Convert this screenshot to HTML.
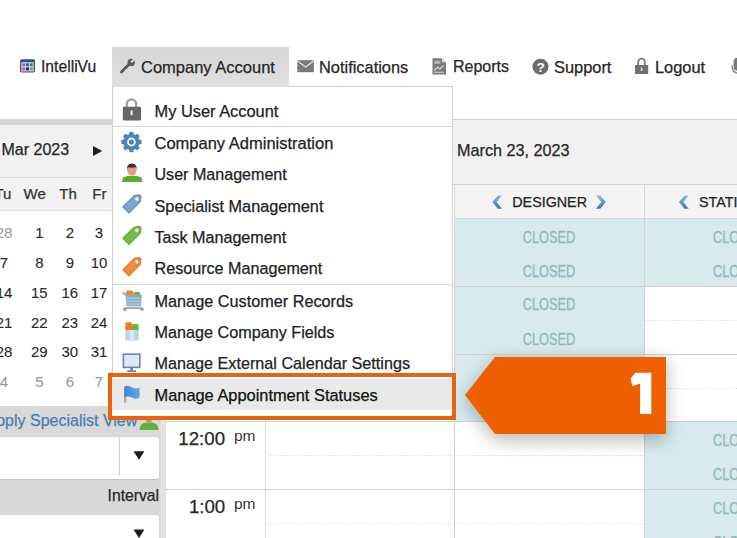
<!DOCTYPE html>
<html><head><meta charset="utf-8">
<style>
*{margin:0;padding:0;box-sizing:border-box}
html,body{width:737px;height:538px;overflow:hidden;background:#fff;font-family:"Liberation Sans",sans-serif;color:#262626}
.a{position:absolute}
.t{position:absolute;line-height:1;white-space:nowrap;-webkit-text-stroke:0.25px currentColor}
.cal .t{-webkit-text-stroke:0.1px currentColor}
</style></head><body>
<div class="a" style="left:0;top:0;width:737px;height:538px;overflow:hidden">

<!-- NAV -->
<div class="t" style="left:41px;top:58.9px;font-size:15.7px">IntelliVu</div>
<div class="t" style="left:319px;top:58.9px;font-size:16.4px">Notifications</div>
<div class="t" style="left:453px;top:58.9px;font-size:16px">Reports</div>
<div class="t" style="left:554px;top:58.9px;font-size:16.4px">Support</div>
<div class="t" style="left:655px;top:58.9px;font-size:16.4px">Logout</div>

<!-- LEFT CALENDAR -->
<div class="a" style="left:0;top:119px;width:165px;height:6px;background:#d6d6d6"></div>
<div class="a" style="left:0;top:125px;width:165px;height:53px;background:#f1f1f1;border-bottom:1px solid #dcdcdc"></div>
<div class="a" style="left:0;top:178px;width:165px;height:33px;background:#f2f2f2;border-bottom:1px solid #dcdcdc"></div>
<div class="t" style="left:1.5px;top:141.7px;font-size:16px">Mar 2023</div>
<svg class="a" style="left:92px;top:143px" width="12" height="14"><polygon points="1,3 10.2,8 1,13" fill="#1e1e1e"/></svg>
<div class="a" style="left:0;top:186px;width:165px;font-size:15px;line-height:15px;color:#333">
 <span class="t" style="left:-17px;width:40px;text-align:center">Tu</span>
 <span class="t" style="left:14.7px;width:40px;text-align:center">We</span>
 <span class="t" style="left:48px;width:40px;text-align:center">Th</span>
 <span class="t" style="left:79.4px;width:40px;text-align:center">Fr</span>
</div>
<div class="a cal" style="left:0;top:0;font-size:15px;line-height:15px;color:#2a2a2a">
 <span class="t" style="left:-16px;top:225.2px;width:40px;text-align:center;color:#999">28</span>
 <span class="t" style="left:19.3px;top:225.2px;width:40px;text-align:center">1</span>
 <span class="t" style="left:49.8px;top:225.2px;width:40px;text-align:center">2</span>
 <span class="t" style="left:79px;top:225.2px;width:40px;text-align:center">3</span>
 <span class="t" style="left:-16px;top:254.7px;width:40px;text-align:center">7</span>
 <span class="t" style="left:19.3px;top:254.7px;width:40px;text-align:center">8</span>
 <span class="t" style="left:49.8px;top:254.7px;width:40px;text-align:center">9</span>
 <span class="t" style="left:79px;top:254.7px;width:40px;text-align:center">10</span>
 <span class="t" style="left:-16px;top:284.7px;width:40px;text-align:center">14</span>
 <span class="t" style="left:19.3px;top:284.7px;width:40px;text-align:center">15</span>
 <span class="t" style="left:49.8px;top:284.7px;width:40px;text-align:center">16</span>
 <span class="t" style="left:79px;top:284.7px;width:40px;text-align:center">17</span>
 <span class="t" style="left:-16px;top:314.7px;width:40px;text-align:center">21</span>
 <span class="t" style="left:19.3px;top:314.7px;width:40px;text-align:center">22</span>
 <span class="t" style="left:49.8px;top:314.7px;width:40px;text-align:center">23</span>
 <span class="t" style="left:79px;top:314.7px;width:40px;text-align:center">24</span>
 <span class="t" style="left:-16px;top:344.2px;width:40px;text-align:center">28</span>
 <span class="t" style="left:19.3px;top:344.2px;width:40px;text-align:center">29</span>
 <span class="t" style="left:49.8px;top:344.2px;width:40px;text-align:center">30</span>
 <span class="t" style="left:79px;top:344.2px;width:40px;text-align:center">31</span>
 <span class="t" style="left:-16px;top:373.7px;width:40px;text-align:center;color:#999">4</span>
 <span class="t" style="left:19.3px;top:373.7px;width:40px;text-align:center;color:#999">5</span>
 <span class="t" style="left:49.8px;top:373.7px;width:40px;text-align:center;color:#999">6</span>
 <span class="t" style="left:79px;top:373.7px;width:40px;text-align:center;color:#999">7</span>
</div>

<!-- bottom-left panel -->
<div class="a" style="left:0;top:406px;width:166px;height:132px;background:linear-gradient(90deg,#d9d9d9 0,#d9d9d9 160px,#e4e4e4 161px,#e2e2e2 166px)"></div>
<div class="t" style="left:-14.5px;top:412.8px;font-size:16px;color:#4a7db3">Apply Specialist View</div>
<svg class="a" style="left:0;top:0" width="170" height="440"><path d="M139.6,430 Q139.6,423 146,422.5 L152,422.5 Q158.5,423 158.5,430 Z" fill="#62b038"/><ellipse cx="148.8" cy="419" rx="3.2" ry="3.8" fill="#d9896a"/></svg>
<div class="a" style="left:-10px;top:435.5px;width:169.5px;height:44.5px;background:#fff;border-radius:4px;border:1px solid #d4d4d4;border-bottom-color:#c4c4c4"></div>
<div class="a" style="left:118.5px;top:437px;width:1px;height:39px;background:#cfcfcf"></div>
<div class="t" style="left:107.6px;top:487.8px;font-size:15.7px">Interval</div>
<div class="a" style="left:-10px;top:514.2px;width:169.5px;height:44.5px;background:#fff;border-radius:4px;border:1px solid #d4d4d4"></div>

<!-- time column -->
<div class="a" style="left:166px;top:406px;width:99.5px;height:132px;background:#fff;border-right:1px solid #d8d8d8"></div>
<div class="t" style="left:178.3px;top:429.6px;font-size:18.7px">12:00</div>
<div class="t" style="left:188.9px;top:497.6px;font-size:18.7px">1:00</div>

<!-- CAL HEADER -->
<div class="a" style="left:452px;top:119px;width:285px;height:66px;background:#f1f1f1;border-top:1px solid #d0d0d0;border-bottom:1px solid #d0d0d0"></div>
<div class="t" style="left:457px;top:141.5px;font-size:16.2px">March 23, 2023</div>
<div class="a" style="left:454px;top:185px;width:283px;height:34px;background:#f4f4f4;border-left:1px solid #d6d6d6;border-bottom:1px solid #d6d6d6"></div>
<div class="a" style="left:644px;top:185px;width:1px;height:34px;background:#d6d6d6"></div>
<div class="t" style="left:512.3px;top:195px;font-size:14.3px;color:#222">DESIGNER</div>
<div class="t" style="left:699px;top:195px;font-size:14.3px;color:#222">STATION</div>

<!-- GRID -->
<svg class="a" style="left:0;top:0" width="737" height="538">
 <g stroke="#e0e0e0" stroke-width="1" stroke-dasharray="1.5,1.5">
  <line x1="454" y1="388.5" x2="737" y2="388.5"/>
  <line x1="645" y1="320.5" x2="737" y2="320.5"/>
  <line x1="265" y1="455.5" x2="737" y2="455.5"/>
  <line x1="265" y1="523.5" x2="737" y2="523.5"/>
 </g>
 <g fill="#d8eaee">
  <rect x="454" y="219" width="190" height="202"/>
  <rect x="645" y="219" width="92" height="67"/>
  <rect x="645" y="422" width="92" height="116"/>
 </g>
 <g stroke="#d2d2d2" stroke-width="1">
  <line x1="454" y1="286.5" x2="737" y2="286.5"/>
  <line x1="454" y1="354.5" x2="737" y2="354.5"/>
  <line x1="165" y1="421.5" x2="737" y2="421.5"/>
  <line x1="165" y1="489.5" x2="737" y2="489.5"/>
  <line x1="644.5" y1="219" x2="644.5" y2="538"/>
  <line x1="454.5" y1="219" x2="454.5" y2="538"/>
 </g>
 <g font-family="Liberation Sans" font-size="15.6" fill="#8fb9be" stroke="#8fb9be" stroke-width="0.3">
  <text x="522.8" y="242.8" textLength="52.4" lengthAdjust="spacingAndGlyphs">CLOSED</text>
  <text x="522.8" y="276.5" textLength="52.4" lengthAdjust="spacingAndGlyphs">CLOSED</text>
  <text x="522.8" y="310.4" textLength="52.4" lengthAdjust="spacingAndGlyphs">CLOSED</text>
  <text x="522.8" y="344.6" textLength="52.4" lengthAdjust="spacingAndGlyphs">CLOSED</text>
  <text x="713" y="242.8" textLength="52.4" lengthAdjust="spacingAndGlyphs">CLOSED</text>
  <text x="713" y="276.5" textLength="52.4" lengthAdjust="spacingAndGlyphs">CLOSED</text>
  <text x="713" y="445.8" textLength="52.4" lengthAdjust="spacingAndGlyphs">CLOSED</text>
  <text x="713" y="479.5" textLength="52.4" lengthAdjust="spacingAndGlyphs">CLOSED</text>
  <text x="713" y="513.5" textLength="52.4" lengthAdjust="spacingAndGlyphs">CLOSED</text>
  <text x="713" y="547.5" textLength="52.4" lengthAdjust="spacingAndGlyphs">CLOSED</text>
 </g>
 <!-- chevrons -->
 <defs><linearGradient id="chv" x1="0" y1="0" x2="0" y2="1"><stop offset="0" stop-color="#8dbde0"/><stop offset="1" stop-color="#3a74ad"/></linearGradient></defs>
 <g fill="url(#chv)">
  <polygon points="497.8,195.4 502,195.4 496.6,202 502,208.7 497.8,208.7 492.3,202"/>
  <polygon points="596,195.4 600.2,195.4 605.8,202 600.2,208.7 596,208.7 601.4,202"/>
  <polygon points="684.5,195.4 688.7,195.4 683.3,202 688.7,208.7 684.5,208.7 679,202"/>
 </g>
 <!-- pm -->
 <text x="234" y="441" font-family="Liberation Sans" font-size="15.5" fill="#333">pm</text>
 <text x="234" y="509" font-family="Liberation Sans" font-size="15.5" fill="#333">pm</text>
 <!-- select arrows -->
 <polygon points="133.5,451.2 144.4,451.2 139,459.8" fill="#1e1e1e"/>
 <polygon points="133.5,529.5 144.4,529.5 139,538.1" fill="#1e1e1e"/>
</svg>

<!-- DROPDOWN -->
<div class="a" style="left:112px;top:86px;width:341px;height:334px;background:#fff;border:1px solid #d0d0d0"></div>
<div class="a" style="left:112px;top:47px;width:177px;height:40px;background:linear-gradient(180deg,#d6d6d6,#e0e0e0)"></div>
<div class="t" style="left:141px;top:58.9px;font-size:16.5px">Company Account</div>
<div class="a" style="left:113px;top:126px;width:339px;height:1px;background:#dadada"></div>
<div class="a" style="left:113px;top:284px;width:339px;height:1px;background:#dadada"></div>
<div class="t" style="left:154.5px;top:102.5px;font-size:16.4px;color:#222">My User Account</div>
<div class="t" style="left:154.5px;top:135px;font-size:16.5px;color:#222">Company Administration</div>
<div class="t" style="left:154.5px;top:166.4px;font-size:16.08px;color:#222">User Management</div>
<div class="t" style="left:154.5px;top:197.8px;font-size:16.25px;color:#222">Specialist Management</div>
<div class="t" style="left:154.5px;top:228.9px;font-size:16.12px;color:#222">Task Management</div>
<div class="t" style="left:154.5px;top:260.2px;font-size:16.15px;color:#222">Resource Management</div>
<div class="t" style="left:154.5px;top:293px;font-size:16.25px;color:#222">Manage Customer Records</div>
<div class="t" style="left:154.5px;top:324px;font-size:16.2px;color:#222">Manage Company Fields</div>
<div class="t" style="left:154.5px;top:355.3px;font-size:16.2px;color:#222">Manage External Calendar Settings</div>
<div class="a" style="left:108px;top:373px;width:348px;height:47px;background:#fff;border:4px solid #eb620e"></div>
<div class="a" style="left:112px;top:378.5px;width:340px;height:31.5px;background:#e9e9e9"></div>
<div class="t" style="left:154.5px;top:386.5px;font-size:16.4px;color:#111">Manage Appointment Statuses</div>


<!-- ICONS -->
<svg class="a" style="left:0;top:0" width="737" height="538">
 <defs>
  <linearGradient id="gb" x1="0" y1="0" x2="0" y2="1"><stop offset="0" stop-color="#6d9fd0"/><stop offset="1" stop-color="#3c73a8"/></linearGradient>
 </defs>
 <!-- intellivu -->
 <rect x="20" y="59.2" width="15" height="13.4" rx="1.8" fill="#2d4f9c"/>
 <rect x="21.3" y="62.3" width="12.4" height="9.1" fill="#e4e8f2"/>
 <rect x="22.2" y="63.3" width="3" height="3" fill="#6a78a8"/>
 <rect x="26" y="63.3" width="3" height="3" fill="#2a62c0"/>
 <rect x="29.8" y="63.3" width="3" height="3" fill="#2a8a38"/>
 <rect x="22.2" y="67.4" width="3" height="3" fill="#d05a48"/>
 <rect x="26" y="67.4" width="3" height="3" fill="#14248a"/>
 <rect x="29.8" y="67.4" width="3" height="3" fill="#a88a50"/>
 <!-- wrench -->
 <line x1="121.4" y1="72" x2="129.6" y2="63.8" stroke="#5a5a5a" stroke-width="2.8" stroke-linecap="round"/>
 <circle cx="131.2" cy="62.4" r="3.7" fill="#5a5a5a"/>
 <polygon points="130.5,61.7 131.9,63.1 135.6,59.6 134,58" fill="#dedede"/>
 <!-- envelope -->
 <rect x="297.3" y="60.2" width="16.6" height="12" fill="#7a7a7a"/>
 <path d="M297.3,60.8 L305.6,67 L313.9,60.8" fill="none" stroke="#e8e8e8" stroke-width="1.1"/>
 <!-- reports doc -->
 <path d="M432.5,58.2 L442,58.2 L446,62.2 L446,74.6 L432.5,74.6 Z" fill="#7a7a7a"/>
 <path d="M442,58.2 L442,62.2 L446,62.2 Z" fill="#e0e0e0"/>
 <rect x="434.3" y="60.6" width="6" height="3.4" fill="#b0b0b0"/>
 <path d="M434.3,70.5 L437.5,67 L440,69 L443.6,65.5" fill="none" stroke="#d8d8d8" stroke-width="1.2"/>
 <rect x="434.3" y="71.6" width="9.4" height="1.4" fill="#c0c0c0"/>
 <!-- question -->
 <circle cx="540.5" cy="66.7" r="8" fill="#6b6b6b"/>
 <text x="540.5" y="71.8" text-anchor="middle" font-family="Liberation Sans" font-weight="bold" font-size="13.5" fill="#fff">?</text>
 <!-- nav lock -->
 <path d="M638.2,65 L638.2,62 A3.3,3.3 0 0 1 644.8,62 L644.8,65" fill="none" stroke="#7a7a7a" stroke-width="1.8"/>
 <rect x="635" y="65" width="13.2" height="9" rx="0.6" fill="#6e6e6e"/>
 <rect x="640.8" y="67.4" width="1.6" height="3.6" fill="#e0e0e0"/>
 <!-- mic -->
 <rect x="733.6" y="57.8" width="8" height="13" rx="4" fill="#7a7a7a"/>
 <path d="M732.3,65.5 L732.3,67.5 A5.5,5.5 0 0 0 737.8,73" fill="none" stroke="#8a8a8a" stroke-width="1.5"/>

 <!-- menu lock -->
 <path d="M126.8,107 L126.8,104 A4.7,4.7 0 0 1 136.2,104 L136.2,107" fill="none" stroke="#9c9c9c" stroke-width="2.2"/>
 <rect x="122.8" y="106.8" width="18.2" height="13.7" rx="0.8" fill="#676767"/>
 <rect x="130.6" y="110.2" width="2" height="5.2" rx="0.8" fill="#f0f0f0"/>
 <!-- gear -->
 <g transform="translate(131.4,142)">
  <g fill="#4d84ba">
   <circle r="8.1"/>
   <rect x="-2.2" y="-10.2" width="4.4" height="20.4" rx="1.3"/>
   <rect x="-2.2" y="-10.2" width="4.4" height="20.4" rx="1.3" transform="rotate(45)"/>
   <rect x="-2.2" y="-10.2" width="4.4" height="20.4" rx="1.3" transform="rotate(90)"/>
   <rect x="-2.2" y="-10.2" width="4.4" height="20.4" rx="1.3" transform="rotate(135)"/>
  </g>
  <circle r="4.4" fill="#eef4f9"/>
  <circle r="2.5" fill="#4a80b4"/>
 </g>
 <!-- user -->
 <path d="M122.2,182 L122.2,180.5 Q122.2,176.3 128,176 L136.5,176 Q142.3,176.3 142.3,180.5 L142.3,182 Z" fill="#5cab34"/>
 <ellipse cx="131.8" cy="170.2" rx="4.6" ry="5.6" fill="#e49a80"/>
 <path d="M126.9,170 Q126.5,163.4 131.8,163.5 Q137.1,163.4 136.7,170 L135.6,167.3 Q131.8,168 128,167.3 Z" fill="#3a3330"/>
 <!-- tags -->
 <g transform="translate(133.2,202.7) rotate(-45)">
  <path d="M-10.3,-4.3 L5.6,-4.3 L10,-1.2 L10,1.2 L5.6,4.3 L-10.3,4.3 Z" fill="#7aa6d2" stroke="#5683b3" stroke-width="1"/>
  <circle cx="5.2" cy="0" r="1.7" fill="#f4faff"/>
 </g>
 <g transform="translate(133.2,234.1) rotate(-45)">
  <path d="M-10.3,-4.3 L5.6,-4.3 L10,-1.2 L10,1.2 L5.6,4.3 L-10.3,4.3 Z" fill="#72c043" stroke="#57a52e" stroke-width="1"/>
  <circle cx="5.2" cy="0" r="1.7" fill="#f4faff"/>
 </g>
 <g transform="translate(133.2,265.5) rotate(-45)">
  <path d="M-10.3,-4.3 L5.6,-4.3 L10,-1.2 L10,1.2 L5.6,4.3 L-10.3,4.3 Z" fill="#f28c3a" stroke="#e07020" stroke-width="1"/>
  <circle cx="5.2" cy="0" r="1.7" fill="#f4faff"/>
 </g>
 <!-- cart -->
 <path d="M122.6,292.6 L126.2,295.2" stroke="#7f9ab0" stroke-width="1.5"/>
 <ellipse cx="129.6" cy="293" rx="4" ry="2.8" fill="#f08a2c"/>
 <ellipse cx="136.8" cy="294" rx="3.6" ry="2.3" fill="#6cb83c"/>
 <polygon points="125.5,295 141.8,295 141,306.2 126.4,306.2" fill="#8eaac0"/>
 <rect x="126.6" y="297.6" width="14.2" height="1.2" fill="#bccddb"/>
 <rect x="126.6" y="300.6" width="14.2" height="1.2" fill="#bccddb"/>
 <rect x="126.6" y="303.4" width="14.2" height="1.2" fill="#bccddb"/>
 <path d="M125.5,308 L141.8,308" stroke="#7f9cb3" stroke-width="1.6"/>
 <circle cx="124.8" cy="309.2" r="1.8" fill="#86a2b8"/>
 <circle cx="142" cy="309.2" r="1.8" fill="#86a2b8"/>
 <!-- fields -->
 <rect x="125.5" y="327" width="13" height="13.6" rx="0.8" fill="#a9c9e4"/>
 <rect x="126.3" y="330" width="11.4" height="10" fill="#bcd6ee"/>
 <rect x="129.8" y="330" width="4" height="10" fill="#d8e8f6"/>
 <path d="M125.3,330 L125.3,324 Q125.3,322.3 127,322.3 L130.6,322.3 Q132,322.3 132,324 L132,330 Z" fill="#f07c28"/>
 <path d="M132,330 L132,325.4 Q132,324 133.4,324 L137,324 Q138.6,324 138.6,325.6 L138.6,330 Z" fill="#6cb83c"/>
 <!-- monitor -->
 <rect x="123.4" y="354.2" width="16.4" height="13.2" fill="#dfe9f2" stroke="#5b88b8" stroke-width="1.6"/>
 <rect x="130.4" y="367.4" width="2.6" height="3.2" fill="#5b88b8"/>
 <rect x="127.2" y="370.3" width="9" height="1.8" fill="#5b88b8"/>
 <!-- flag -->
 <defs><linearGradient id="flg" x1="0" y1="0" x2="1" y2="0"><stop offset="0" stop-color="#3d86d6"/><stop offset="1" stop-color="#62a9ec"/></linearGradient></defs>
 <rect x="124.2" y="387" width="2" height="15.8" fill="#a0a0a0"/>
 <path d="M124.2,386.4 Q128,384.6 131.8,387.2 Q135.5,389.6 139.6,387.6 L139.6,397.4 Q135.5,399.8 131.8,397.6 Q128,395.4 124.2,397.4 Z" fill="url(#flg)"/>
</svg>

<!-- CALLOUT -->
<svg class="a" style="left:0;top:0" width="737" height="538">
 <defs><filter id="sh" x="-30%" y="-50%" width="160%" height="200%"><feGaussianBlur stdDeviation="9"/></filter></defs>
 <polygon points="465,399 495,361 666,361 666,440 495,440" fill="rgba(0,0,0,0.28)" filter="url(#sh)"/>
 <polygon points="465,395 495,357 666,357 666,434 495,434" fill="#ee5f00"/>
 <path d="M635.4,372.8 L651.3,372.8 L651.3,414.1 L640.1,414.1 L640.1,383.6 L632.3,386.3 L630.6,378.6 Z" fill="#fff"/>
</svg>

</div>
</body></html>
